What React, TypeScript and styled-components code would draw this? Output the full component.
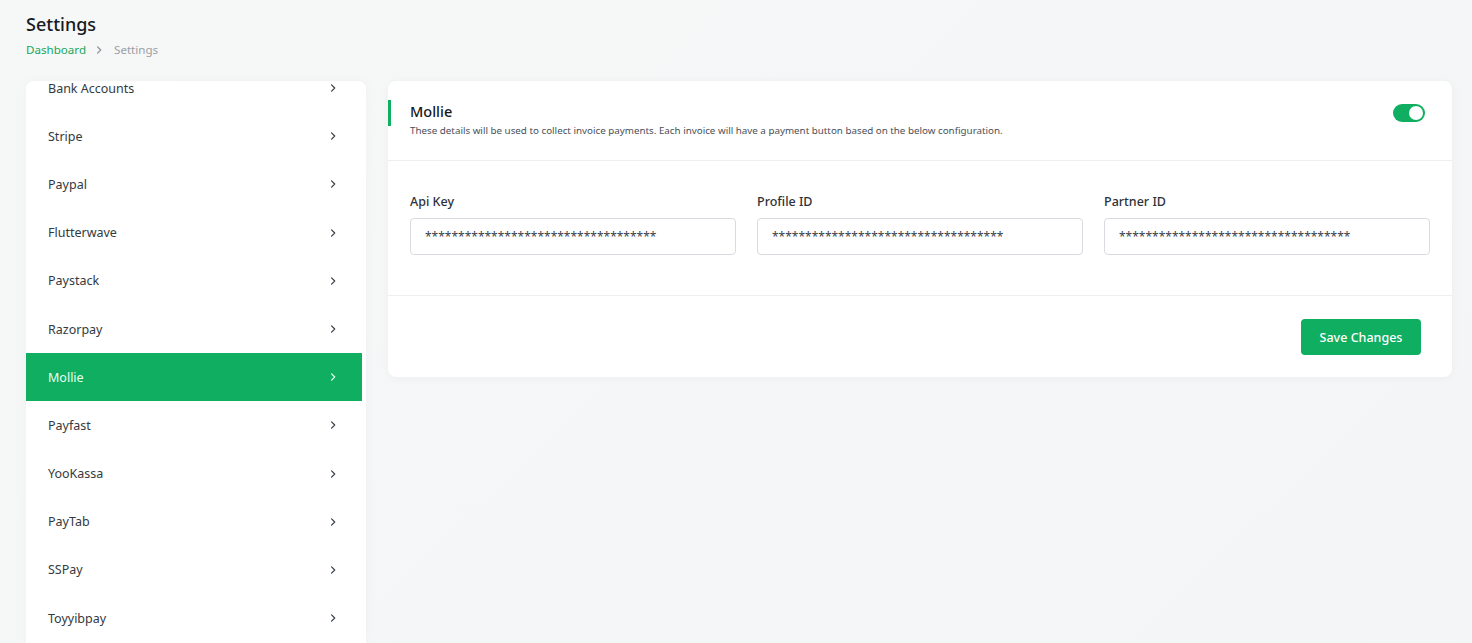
import React from "react";
import styled, { createGlobalStyle } from "styled-components";

const GREEN = "#10ae60";

const Global = createGlobalStyle`
  html, body { margin: 0; padding: 0; }
  body {
    background: linear-gradient(135deg, #f6f7f7 0%, #f4f5f6 100%);
    font-family: "Noto Sans", "Open Sans", sans-serif;
    color: #1f2430;
    height: 643px;
    overflow: hidden;
  }
  * { box-sizing: border-box; }
`;

const Page = styled.div`
  padding: 12px 20px 0 26px;
`;

const Title = styled.h1`
  margin: 0;
  font-size: 18px;
  line-height: 24px;
  font-weight: 500;
  color: #17191d;
`;

const Crumbs = styled.div`
  display: flex;
  align-items: center;
  gap: 8px;
  margin-top: 6px;
  font-size: 11.6px;
  line-height: 16px;
  color: #9aa0a6;
`;

const CrumbLink = styled.span`
  color: #17a85c;
`;

const Layout = styled.div`
  display: flex;
  align-items: flex-start;
  gap: 22px;
  margin-top: 23px;
`;

const Sidebar = styled.div`
  width: 340px;
  flex: none;
  height: 562px;
  overflow: hidden;
  background: #fff;
  border-radius: 8px 8px 0 0;
  padding-right: 4px;
  box-shadow: 0 0 12px rgba(30, 40, 60, 0.03);
`;

const MenuList = styled.ul`
  list-style: none;
  margin: -17px 0 0 0;
  padding: 0;
`;

const MenuItem = styled.li<{ $active?: boolean }>`
  display: flex;
  align-items: center;
  justify-content: space-between;
  height: 48.2px;
  padding: 0 22px 0 22px;
  font-size: 12.5px;
  color: ${(p) => (p.$active ? "#e8fff2" : "#343a40")};
  background: ${(p) => (p.$active ? GREEN : "transparent")};
`;

const Chevron = styled.svg`
  width: 10px;
  height: 10px;
  margin-right: 2px;
`;

const Card = styled.div`
  flex: 1;
  background: #fff;
  border-radius: 8px;
  box-shadow: 0 1px 10px rgba(30, 40, 60, 0.04);
`;

const CardHeader = styled.div`
  position: relative;
  display: flex;
  justify-content: space-between;
  align-items: flex-start;
  padding: 20px 27px 22px 22px;
  border-bottom: 1px solid #eceef0;
  &::before {
    content: "";
    position: absolute;
    left: 0;
    top: 19px;
    width: 3px;
    height: 26px;
    background: ${GREEN};
  }
`;

const HeadText = styled.div`
  display: flex;
  flex-direction: column;
`;

const CardTitle = styled.div`
  font-size: 14.5px;
  line-height: 20px;
  font-weight: 500;
  color: #17191d;
`;

const CardDesc = styled.div`
  margin-top: 3px;
  font-size: 9.8px;
  line-height: 14px;
  color: #4a5058;
`;

const Toggle = styled.div`
  width: 32px;
  height: 18px;
  margin-top: 3px;
  border-radius: 9px;
  background: ${GREEN};
  display: flex;
  align-items: center;
  justify-content: flex-end;
  padding: 2px;
`;

const Knob = styled.span`
  width: 14px;
  height: 14px;
  border-radius: 50%;
  background: #fff;
`;

const CardBody = styled.div`
  display: grid;
  grid-template-columns: repeat(3, 1fr);
  gap: 21px;
  padding: 32px 22px 40px 22px;
  border-bottom: 1px solid #eceef0;
`;

const Field = styled.div`
  display: flex;
  flex-direction: column;
  gap: 7px;
`;

const Label = styled.label`
  font-size: 12.5px;
  line-height: 18px;
  font-weight: 500;
  color: #2d3238;
`;

const Input = styled.input`
  height: 37px;
  border: 1px solid #d8dbdf;
  border-radius: 4px;
  padding: 0 14px;
  font-family: "Noto Sans", sans-serif;
  font-size: 12px;
  color: #3a4048;
  background: #fff;
  outline: none;
`;

const CardFooter = styled.div`
  display: flex;
  justify-content: flex-end;
  padding: 23px 31px 22px 22px;
`;

const SaveButton = styled.button`
  height: 36px;
  width: 120px;
  border: none;
  border-radius: 4px;
  background: ${GREEN};
  color: #fff;
  font-family: "Noto Sans", sans-serif;
  font-size: 12.5px;
  font-weight: 500;
`;

const items = [
  "Bank Accounts",
  "Stripe",
  "Paypal",
  "Flutterwave",
  "Paystack",
  "Razorpay",
  "Mollie",
  "Payfast",
  "YooKassa",
  "PayTab",
  "SSPay",
  "Toyyibpay",
];

const ChevronIcon = ({ color }: { color: string }) => (
  <Chevron viewBox="0 0 10 10">
    <path d="M3.6 1.9 L6.7 5 L3.6 8.1" fill="none" stroke={color} strokeWidth="1.25" strokeLinecap="round" strokeLinejoin="round" />
  </Chevron>
);

const stars = "*".repeat(35);

export default function App() {
  return (
    <>
      <Global />
      <Page>
        <Title>Settings</Title>
        <Crumbs>
          <CrumbLink>Dashboard</CrumbLink>
          <ChevronIcon color="#8a9096" />
          <span>Settings</span>
        </Crumbs>
        <Layout>
          <Sidebar>
            <MenuList>
              {items.map((it) => (
                <MenuItem key={it} $active={it === "Mollie"}>
                  <span>{it}</span>
                  <ChevronIcon color={it === "Mollie" ? "#e8fff2" : "#3a4048"} />
                </MenuItem>
              ))}
            </MenuList>
          </Sidebar>
          <Card>
            <CardHeader>
              <HeadText>
                <CardTitle>Mollie</CardTitle>
                <CardDesc>
                  These details will be used to collect invoice payments. Each invoice will have a payment button based on the below configuration.
                </CardDesc>
              </HeadText>
              <Toggle>
                <Knob />
              </Toggle>
            </CardHeader>
            <CardBody>
              <Field>
                <Label>Api Key</Label>
                <Input readOnly value={stars} />
              </Field>
              <Field>
                <Label>Profile ID</Label>
                <Input readOnly value={stars} />
              </Field>
              <Field>
                <Label>Partner ID</Label>
                <Input readOnly value={stars} />
              </Field>
            </CardBody>
            <CardFooter>
              <SaveButton>Save Changes</SaveButton>
            </CardFooter>
          </Card>
        </Layout>
      </Page>
    </>
  );
}
